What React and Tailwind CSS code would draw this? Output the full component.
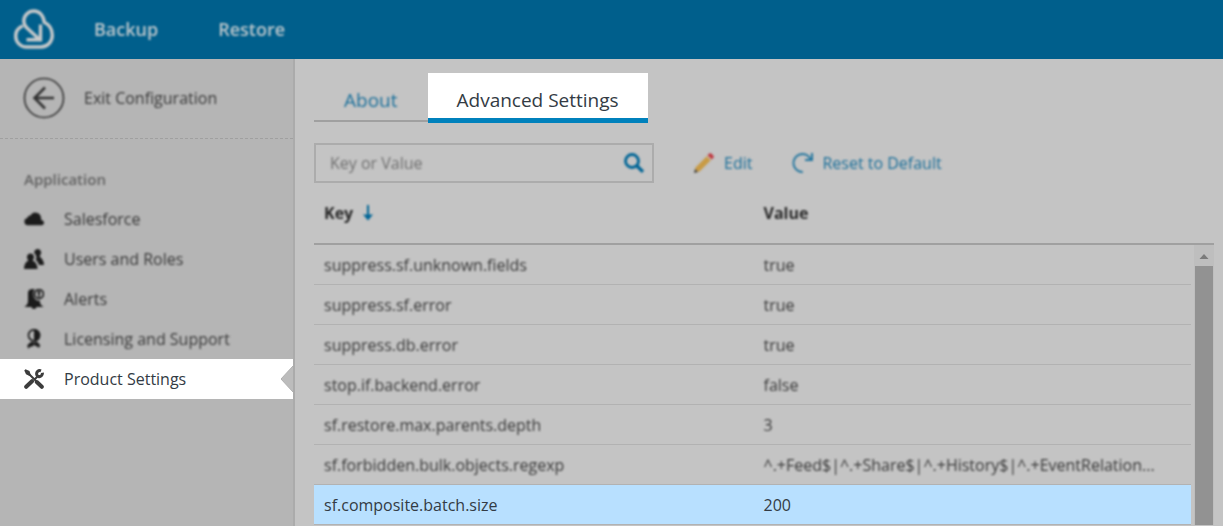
import clsx from 'clsx';

const settings = [
  { key: 'suppress.sf.unknown.fields', value: 'true' },
  { key: 'suppress.sf.error', value: 'true' },
  { key: 'suppress.db.error', value: 'true' },
  { key: 'stop.if.backend.error', value: 'false' },
  { key: 'sf.restore.max.parents.depth', value: '3' },
  { key: 'sf.forbidden.bulk.objects.regexp', value: '^.+Feed$|^.+Share$|^.+History$|^.+EventRelation...' },
  { key: 'sf.composite.batch.size', value: '200', active: true },
];

const navItems = [
  { label: 'Salesforce', icon: CloudIcon },
  { label: 'Users and Roles', icon: UsersIcon },
  { label: 'Alerts', icon: BellIcon },
  { label: 'Licensing and Support', icon: LicenseIcon },
  { label: 'Product Settings', icon: ToolsIcon, active: true },
];

function Logo() {
  return (
    <svg viewBox="0 0 40 40" className="size-10" fill="none" stroke="#c6c9ca" strokeWidth="3.4" strokeLinecap="round" aria-hidden="true">
      <path d="M7.5 17.5C3.6 19.6 1.7 23.2 1.7 27c0 6.200 4.800 11 10.800 11h14.500c6.500 0 11.300-5.300 11.300-11.800 0-6-3.300-10.700-8-12.900C29.600 6.400 25.400 2 20 2 14.300 2 9.800 6.500 9.800 12c0 2.900 1.200 5.100 3.200 7l12.500 11.500" />
      <path d="M12.500 30.800h14V15.500" strokeLinecap="butt" strokeLinejoin="miter" />
    </svg>
  );
}

function BackIcon() {
  return (
    <svg viewBox="0 0 40 40" className="size-10 overflow-visible" fill="none" stroke="#333" aria-hidden="true">
      <circle cx="20" cy="20" r="19.500" strokeWidth="1.600" />
      <path d="M30 20H11M21 9.500L10.500 20 21 30.500" strokeWidth="2.600" />
    </svg>
  );
}

function CloudIcon() {
  return (
    <svg viewBox="0 0 20 20" className="size-5" fill="currentColor" aria-hidden="true">
      <path d="M3.700 16.200A3.700 3.700 0 0 1 3.300 8.900 3.200 3.200 0 0 1 6.500 6.600 5.600 5.600 0 0 1 17 8.400c.3 1 .3 1.900.1 2.700 1.800.3 2.900 1.300 2.900 2.700 0 1.500-1 2.400-2.400 2.400z" />
    </svg>
  );
}

function UsersIcon() {
  return (
    <svg viewBox="0 0 20 20" className="size-5" fill="currentColor" aria-hidden="true">
      <path d="M13.500 0a3.500 3.500 0 0 1 3.200 5.200c-.4 1-.8 1.700-1.200 2.200 2.500 1.700 4.500 4.600 4.500 8.600h-5c-.6-2.200-1.700-3.800-3.300-5 .9-1.700.9-3.700-.1-5.300-.3-.5-.7-.9-1.200-1.200A3.400 3.400 0 0 1 13.500 0z" />
      <path d="M6.500 4.400c2.100 0 3.500 1.600 3.500 3.600 0 1.500-.6 2.700-1.500 3.600 2.900 1.400 5 4 5 8.400H0c0-4.400 1.700-7 4.500-8.400C3.600 10.700 3 9.500 3 8c0-2 1.400-3.600 3.500-3.600z" />
    </svg>
  );
}

function BellIcon() {
  return (
    <svg viewBox="0 0 20 20" className="size-5" fill="currentColor" aria-hidden="true">
      <path d="M4 3.500C4.300 1 6 0 8.500 0h2.200C8.500 3 9 8.500 12 10.700c1.100.9 2.500 1.100 4 .9v1.300c0 2 1.500 3.600 3.700 5.100H12.500c-.2 1.300-1.100 2-2.500 2s-2.300-.7-2.500-2H.3C3 16.200 4 14.500 4 12z" />
      <circle cx="15" cy="5" r="4.400" fill="none" stroke="currentColor" strokeWidth="1.700" />
      <path d="M13.700 2h2.600l-.4 4h-1.800zM14 6.400h2v1.600h-2z" />
    </svg>
  );
}

function LicenseIcon() {
  return (
    <svg viewBox="0 0 20 20" className="size-5" fill="currentColor" aria-hidden="true">
      <circle cx="10" cy="6.300" r="5.500" fill="none" stroke="currentColor" strokeWidth="1.700" />
      <path d="M10 0a6.300 6.300 0 0 1 0 12.600zM4.200 19.800l-1-3c1-1.800 2.800-3.600 5-4.300l2 1.300 1.800-1.300c2.200.7 3.500 2.300 4.300 4.300l-1.600 2.300-1.200-1.600c-1.200.3-2.200-.3-3.300-1.700-1.300 1.600-2.400 2.300-4 2z" />
    </svg>
  );
}

function ToolsIcon() {
  return (
    <svg viewBox="0 0 20 20" className="size-5" fill="none" stroke="currentColor" aria-hidden="true">
      <path d="M2.200 17.800L8 12.200M12.800 13l5 4.800" strokeWidth="4" strokeLinecap="round" />
      <path d="M4 4l9 9M10 11l4-4" strokeWidth="2" />
      <path d="M.3 1.500L1.500.3l4 1.700 1.200 4L5.500 7 2 5.300z" fill="currentColor" stroke="none" />
      <path d="M17 1.800c-2.500-1-5 1.200-4.200 4 .2.900.9 1.500 1.700 1.700 2.200.6 4.200-1.500 3.900-3.700" strokeWidth="3" />
    </svg>
  );
}

function SearchIcon() {
  return (
    <svg viewBox="0 0 20 20" className="size-5" fill="none" stroke="#006596" aria-hidden="true">
      <circle cx="8" cy="8" r="6.500" strokeWidth="2.800" />
      <path d="M12.500 12.500l6.500 6.300" strokeWidth="3.400" />
    </svg>
  );
}

function PencilIcon() {
  return (
    <svg viewBox="0 0 20 20" className="size-5" aria-hidden="true">
      <path d="M1.500 14.500L13.500 2.500l4 4-12 12-5 1z" fill="#c79a45" />
      <path d="M13 3l2.300-2.400c.6-.6 1.400-.6 2 0l2.100 2.100c.6.600.6 1.400 0 2L17 7z" fill="#bf3941" />
      <path d="M12.500 3.500l1.200-1.200 4 4-1.200 1.200z" fill="#c9b7a5" />
      <path d="M1 16l3 3-4 1z" fill="#444" />
    </svg>
  );
}

function ResetIcon() {
  return (
    <svg viewBox="0 0 20 20" className="size-5 overflow-visible" fill="none" stroke="#26779f" strokeWidth="2" aria-hidden="true">
      <path d="M10.800 19A9 9 0 1 1 18.500 6" />
      <path d="M20 0v7h-7" />
    </svg>
  );
}

function NavItem({ label, icon: Icon, active }) {
  return (
    <li>
      <a
        href="#"
        aria-current={active ? 'page' : undefined}
        className={clsx('relative flex h-10 items-center pl-6', active ? 'bg-white text-[#333b44]' : 'text-[#383838]')}
      >
        <span className={clsx('flex items-center gap-5', !active && 'blur-[1px]')}>
          <span className={active ? 'text-[#3c3c3c]' : 'text-[#1c1c1c]'}><Icon /></span>
          {label}
        </span>
        {active && (
          <svg viewBox="0 0 12 26" className="absolute right-0 top-[7px] h-[26px] w-3" aria-hidden="true">
            <path d="M12 0L0 13l12 13z" fill="#bcbcbc" />
            <path d="M12 0L0 13l12 13" fill="none" stroke="#b0b0b0" />
          </svg>
        )}
      </a>
    </li>
  );
}

function Sidebar() {
  return (
    <aside className="w-[295px] shrink-0 border-r-2 border-[#ababab] bg-[#b5b5b5]">
      <div className="flex h-20 items-center border-b border-dashed border-[#a0a0a0] pb-0.5 pl-6">
        <button type="button" className="flex items-center gap-5 text-[#383838] blur-[1px]">
          <BackIcon />
          Exit Configuration
        </button>
      </div>
      <h2 className="mt-7 pl-6 text-[15px] font-semibold leading-6 text-[#626262] blur-[1px]">Application</h2>
      <ul className="mt-2">
        {navItems.map((item) => (
          <NavItem key={item.label} {...item} />
        ))}
      </ul>
    </aside>
  );
}

function Tabs() {
  return (
    <div role="tablist" className="flex h-[50px] items-stretch text-[19px]">
      <button type="button" role="tab" aria-selected="false" className="mb-px border-b-2 border-[#a0a0a0] px-[30px] pt-2 font-medium text-[#1a6f9a]">
        <span className="block blur-[1px]">About</span>
      </button>
      <button type="button" role="tab" aria-selected="true" className="border-b-[5px] border-[#0081bc] bg-white px-[29px] pt-2.5 text-[#333b44]">
        Advanced Settings
      </button>
    </div>
  );
}

function Toolbar() {
  return (
    <div className="mt-5 flex items-center text-[#1a6f9a]">
      <div className="flex h-10 w-[340px] items-center border-2 border-[#acacac] pl-3.5 pr-2">
        <input
          type="text"
          aria-label="Key or Value"
          placeholder="Key or Value"
          className="min-w-0 flex-1 bg-transparent outline-none blur-[1px] placeholder:text-[#707070]"
        />
        <button type="button" aria-label="Search" className="blur-[1px]"><SearchIcon /></button>
      </div>
      <button type="button" className="ml-10 flex items-center gap-2.5 font-medium blur-[1px]">
        <PencilIcon />
        Edit
      </button>
      <button type="button" className="ml-10 flex items-center gap-2.5 font-medium blur-[1px]">
        <ResetIcon />
        Reset to Default
      </button>
    </div>
  );
}

function SettingsTable() {
  return (
    <div className="flex">
      <table className="min-w-0 flex-1 table-fixed border-separate border-spacing-0 text-left">
        <thead>
          <tr className="h-[62px] text-[#2a2a2a]">
            <th className="w-1/2 border-b-2 border-[#a0a0a0] px-2.5 font-bold">
              <span className="flex items-center gap-2.5 blur-[1px]">
                Key
                <svg viewBox="0 0 10 16" className="h-4 w-2.5" fill="#006596" aria-hidden="true">
                  <path d="M4 0h2v9.500h4L5 15.500 0 9.500h4z" />
                </svg>
              </span>
            </th>
            <th className="border-b-2 border-[#a0a0a0] px-[11px] font-bold">
              <span className="block blur-[1px]">Value</span>
            </th>
          </tr>
        </thead>
        <tbody>
          {settings.map(({ key, value, active }) => (
            <tr key={key} className={clsx('h-10', active ? 'bg-[#b8e0ff] text-[#333b44]' : 'text-[#383838]')}>
              <td className="border-b border-[#b2b2b2] px-2.5">
                <span className={clsx('block', !active && 'blur-[1px]')}>{key}</span>
              </td>
              <td className="border-b border-[#b2b2b2] px-[11px]">
                <span className={clsx('block whitespace-nowrap', !active && 'blur-[1px]')}>{value}</span>
              </td>
            </tr>
          ))}
        </tbody>
      </table>
      <div className="flex w-[23px] flex-col">
        <div className="h-[62px] border-b-2 border-[#a0a0a0]" />
        <div className="ml-[3px] flex flex-1 flex-col bg-[#bebebe] px-px">
          <svg viewBox="0 0 18 21" className="h-[21px] w-full" fill="#7b7b7b" aria-hidden="true">
            <path d="M4.500 14h9L9 9z" />
          </svg>
          <div className="flex-1 bg-[#929292]" />
        </div>
      </div>
    </div>
  );
}

export default function App() {
  return (
    <div className="flex min-h-screen flex-col bg-[#c4c4c4] font-['Open_Sans',sans-serif] text-base">
      <header className="flex h-[59px] items-center bg-[#005f8c] pb-0.5 pl-3.5 text-lg font-semibold text-[#bcc7cc]">
        <span className="blur-[1px]"><Logo /></span>
        <nav className="ml-10 flex gap-[60px] blur-[1px]">
          <a href="#">Backup</a>
          <a href="#">Restore</a>
        </nav>
      </header>
      <div className="flex flex-1">
        <Sidebar />
        <main className="min-w-0 flex-1 pl-[19px] pr-[9px] pt-3.5">
          <Tabs />
          <Toolbar />
          <SettingsTable />
        </main>
      </div>
    </div>
  );
}
